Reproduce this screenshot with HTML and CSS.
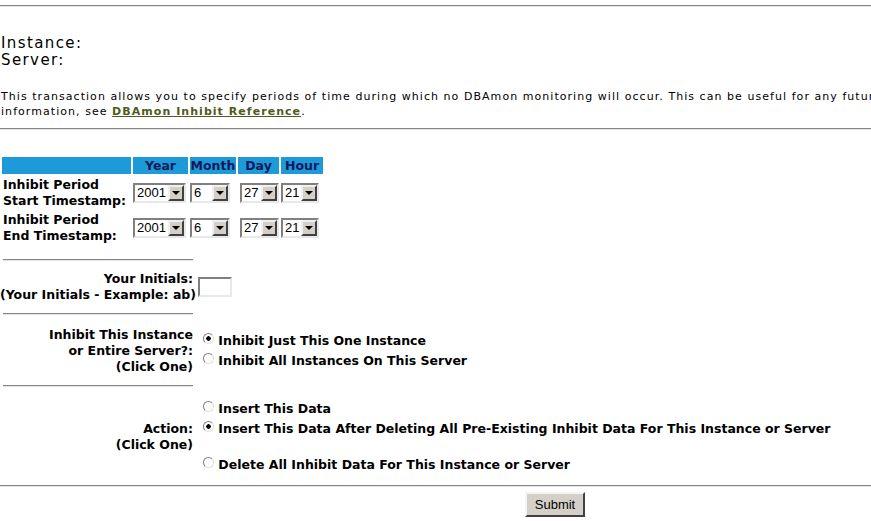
FILE: index.html
```html
<!DOCTYPE html>
<html lang="en">
<head>
    <meta charset="UTF-8">
    <title>DBAmon Inhibit</title>
    <link rel="stylesheet" href="styles.css">
</head>
<body>
    <div class="page">
        <hr class="rule">
        <div class="ident">
            Instance:<br>
            Server:
        </div>
        <p class="intro">
            This transaction allows you to specify periods of time during which no DBAmon monitoring will occur. This can be useful for any future scheduled outages. For more<br>
            information, see <a href="#">DBAmon Inhibit Reference</a>.
        </p>
        <hr class="rule">

        <form>
            <table class="stamp">
                <tr class="stamp-head">
                    <th class="c-label"></th>
                    <th class="c-year">Year</th>
                    <th class="c-month">Month</th>
                    <th class="c-day">Day</th>
                    <th class="c-hour">Hour</th>
                </tr>
                <tr>
                    <td class="stamp-label">Inhibit Period<br>Start Timestamp:</td>
                    <td><span class="combo w-year"><select><option>2001</option></select></span></td>
                    <td><span class="combo w-month"><select><option>6</option></select></span></td>
                    <td><span class="combo w-day"><select><option>27</option></select></span></td>
                    <td><span class="combo w-hour"><select><option>21</option></select></span></td>
                </tr>
                <tr>
                    <td class="stamp-label">Inhibit Period<br>End Timestamp:</td>
                    <td><span class="combo w-year"><select><option>2001</option></select></span></td>
                    <td><span class="combo w-month"><select><option>6</option></select></span></td>
                    <td><span class="combo w-day"><select><option>27</option></select></span></td>
                    <td><span class="combo w-hour"><select><option>21</option></select></span></td>
                </tr>
            </table>

            <div class="opts">
                <hr class="rule short">
                <div class="opt-row">
                    <div class="opt-label">Your Initials:<br>(Your Initials - Example: ab)</div>
                    <div class="opt-field"><input type="text" class="initials" maxlength="3"></div>
                </div>
                <hr class="rule short">
                <div class="opt-row choice-row">
                    <div class="opt-label">Inhibit This Instance<br>or Entire Server?:<br>(Click One)</div>
                    <div class="opt-field">
                        <label class="choice"><input type="radio" name="scope" checked> Inhibit Just This One Instance</label>
                        <label class="choice"><input type="radio" name="scope"> Inhibit All Instances On This Server</label>
                    </div>
                </div>
                <hr class="rule short">
                <div class="opt-row choice-row">
                    <div class="opt-label">Action:<br>(Click One)</div>
                    <div class="opt-field">
                        <label class="choice"><input type="radio" name="action"> Insert This Data</label>
                        <label class="choice"><input type="radio" name="action" checked> Insert This Data After Deleting All Pre-Existing Inhibit Data For This Instance or Server</label>
                        <label class="choice spaced"><input type="radio" name="action"> Delete All Inhibit Data For This Instance or Server</label>
                    </div>
                </div>
            </div>

            <hr class="rule">
            <div class="submit-bar">
                <button type="submit" class="submit">Submit</button>
            </div>
        </form>
    </div>
</body>
</html>
```

FILE: styles.css
```css
html, body {
    overflow: hidden;
}
body {
    margin: 0;
    padding: 0;
    background-color: #fff;
    color: #000;
    font-family: "DejaVu Sans", Verdana, sans-serif;
}
.page {
    width: 1110px;
    padding-top: 5px;
}
.rule {
    height: 0;
    margin: 0;
    border: none;
    border-top: 1px solid #858585;
    border-bottom: 1px solid #e4e4e4;
}
.rule.short {
    width: 190px;
    margin-left: 3px;
}
.ident {
    margin-top: 28px;
    padding-left: 1px;
    font-size: 15px;
    line-height: 17px;
    letter-spacing: 1.4px;
}
.intro {
    margin: 20px 0 9px 0;
    padding-left: 1px;
    font-size: 11px;
    line-height: 15px;
    letter-spacing: 1.05px;
    white-space: nowrap;
}
.intro a {
    color: #4f5a1c;
    font-weight: bold;
}
form {
    margin: 0;
}
.stamp {
    margin-top: 25px;
    border-collapse: separate;
    border-spacing: 2px;
    font-size: 12.5px;
    font-weight: bold;
}
.stamp th,
.stamp td {
    padding: 0;
}
.stamp-head th {
    height: 17px;
    background-color: #1f9ad8;
    color: #0a1a5c;
    font-size: 12.5px;
    text-align: center;
    line-height: 17px;
}
.c-label { width: 129px; }
.c-year { width: 55px; }
.c-month { width: 46px; }
.c-day { width: 41px; }
.c-hour { width: 42px; }
.stamp td {
    height: 33px;
    text-align: left;
    vertical-align: middle;
}
.stamp-label {
    line-height: 16px;
    padding-left: 1px !important;
    white-space: nowrap;
}
.combo {
    position: relative;
    display: inline-block;
    vertical-align: middle;
    height: 20px;
    box-sizing: border-box;
    border: 2px solid;
    border-color: #808080 #e8e8e8 #e8e8e8 #808080;
    background-color: #fff;
}
.combo select {
    appearance: none;
    -webkit-appearance: none;
    display: block;
    width: 100%;
    height: 16px;
    margin: 0;
    padding: 0 0 0 2px;
    border: none;
    outline: none;
    background: transparent;
    font-family: "Liberation Sans", Arial, sans-serif;
    font-size: 13px;
    line-height: 16px;
    color: #000;
}
/* the dropdown arrow button sits over the right side of the box */
.combo::after {
    content: "";
    position: absolute;
    top: 0;
    right: 0;
    width: 12px;
    height: 12px;
    border: 2px solid;
    border-color: #f0f0f0 #404040 #404040 #f0f0f0;
    background-color: #d4d0c8;
    pointer-events: none;
}
.combo::before {
    content: "";
    position: absolute;
    z-index: 1;
    top: 6px;
    right: 4px;
    border-left: 4px solid transparent;
    border-right: 4px solid transparent;
    border-top: 4px solid #000;
    pointer-events: none;
}
.w-year { width: 53px; }
.w-month { width: 40px; }
.w-day { width: 39px; margin-left: 2px; }
.w-hour { width: 38px; }

.opts {
    margin-top: 13px;
    font-size: 12.5px;
    font-weight: bold;
}
.opt-row {
    display: flex;
    align-items: center;
    padding: 10px 0;
}
.opt-row.choice-row {
    padding: 12px 0 10px 0;
}
.opt-label {
    width: 193px;
    padding-right: 3px;
    flex-shrink: 0;
    text-align: right;
    line-height: 16px;
    white-space: nowrap;
}
.initials {
    display: block;
    width: 34px;
    height: 20px;
    box-sizing: border-box;
    margin: 0 0 0 2px;
    padding: 0;
    border: 2px solid;
    border-color: #808080 #e8e8e8 #e8e8e8 #808080;
    font-family: "Liberation Sans", Arial, sans-serif;
}
.choice {
    display: block;
    padding-left: 7px;
    line-height: 20px;
    white-space: nowrap;
}
.choice.spaced {
    margin-top: 16px;
}
.choice input {
    appearance: none;
    -webkit-appearance: none;
    position: relative;
    top: -3px;
    width: 11px;
    height: 11px;
    margin: 0;
    box-sizing: border-box;
    border: 1px solid;
    border-color: #808080 #e0e0e0 #e0e0e0 #808080;
    border-radius: 50%;
    background-color: #fff;
    vertical-align: middle;
}
.choice input:checked {
    background: radial-gradient(circle, #000 0, #000 2px, #fff 2.5px);
}
.submit-bar {
    padding-top: 5px;
    text-align: center;
}
.submit {
    width: 60px;
    height: 25px;
    padding: 0;
    border: 2px solid;
    border-color: #f4f4f4 #404040 #404040 #f4f4f4;
    background-color: #d4d0c8;
    font-family: "Liberation Sans", Arial, sans-serif;
    font-size: 13px;
    color: #000;
}
```
